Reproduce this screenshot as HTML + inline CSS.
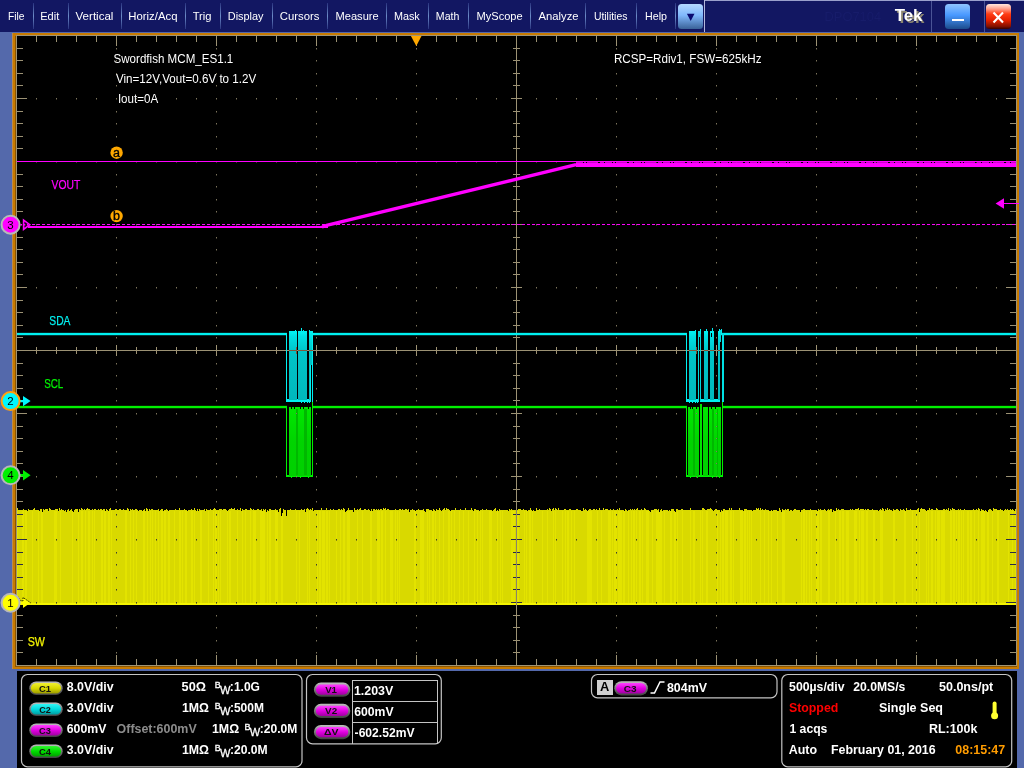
<!DOCTYPE html>
<html lang="en"><head><meta charset="utf-8"><title>DPO7104 - Swordfish MCM_ES1.1</title>
<style>
html,body{margin:0;padding:0;background:#5469ab;overflow:hidden}
svg{display:block;will-change:transform;font-family:"Liberation Sans",Arial,sans-serif}
svg text{white-space:pre}
</style></head><body>
<svg width="1024" height="768" viewBox="0 0 1024 768" shape-rendering="crispEdges">
<defs>
<linearGradient id="sepg" x1="0" y1="0" x2="0" y2="1"><stop offset="0" stop-color="#2a3480"/><stop offset="0.5" stop-color="#6c8cc8"/><stop offset="1" stop-color="#2a3480"/></linearGradient>
<linearGradient id="btnblue" x1="0" y1="0" x2="0" y2="1"><stop offset="0" stop-color="#b4d8ff"/><stop offset="0.45" stop-color="#80b8fc"/><stop offset="1" stop-color="#3a6298"/></linearGradient>
<linearGradient id="btnblue2" x1="0" y1="0" x2="0" y2="1"><stop offset="0" stop-color="#90c4ff"/><stop offset="0.45" stop-color="#4898ff"/><stop offset="1" stop-color="#1c4c8c"/></linearGradient>
<linearGradient id="btnred" x1="0" y1="0" x2="0" y2="1"><stop offset="0" stop-color="#ffe8e0"/><stop offset="0.2" stop-color="#ff9c88"/><stop offset="0.4" stop-color="#ff3c14"/><stop offset="0.65" stop-color="#e42000"/><stop offset="0.9" stop-color="#801000"/><stop offset="1" stop-color="#380000"/></linearGradient>
<linearGradient id="ring" x1="0" y1="0" x2="0" y2="1"><stop offset="0" stop-color="#c0c0c0"/><stop offset="0.5" stop-color="#787878"/><stop offset="1" stop-color="#404040"/></linearGradient>
<linearGradient id="py" x1="0" y1="0" x2="0" y2="1"><stop offset="0" stop-color="#f0f030"/><stop offset="0.5" stop-color="#d8d800"/><stop offset="1" stop-color="#9c9c00"/></linearGradient>
<linearGradient id="pc" x1="0" y1="0" x2="0" y2="1"><stop offset="0" stop-color="#30f4f4"/><stop offset="0.5" stop-color="#00d8dc"/><stop offset="1" stop-color="#009ca0"/></linearGradient>
<linearGradient id="pm" x1="0" y1="0" x2="0" y2="1"><stop offset="0" stop-color="#ff40ff"/><stop offset="0.5" stop-color="#e000e0"/><stop offset="1" stop-color="#a000a0"/></linearGradient>
<linearGradient id="pg" x1="0" y1="0" x2="0" y2="1"><stop offset="0" stop-color="#30f430"/><stop offset="0.5" stop-color="#00dc00"/><stop offset="1" stop-color="#00a000"/></linearGradient>
<linearGradient id="gcy" x1="0" y1="0" x2="0" y2="1"><stop offset="0" stop-color="#00f4f4"/><stop offset="0.08" stop-color="#00e0e4"/><stop offset="0.3" stop-color="#00c4c8"/><stop offset="1" stop-color="#00b8bc"/></linearGradient>
<linearGradient id="ggr" x1="0" y1="0" x2="0" y2="1"><stop offset="0" stop-color="#00e800"/><stop offset="0.5" stop-color="#00d400"/><stop offset="1" stop-color="#00d000"/></linearGradient>
</defs>
<rect x="0" y="0" width="1024" height="768" fill="#5469ab"/>
<rect x="0" y="0" width="1024" height="32" fill="#121762"/>
<rect x="704" y="0" width="320" height="1" fill="#9aa0cc"/>
<rect x="704" y="0" width="1" height="32" fill="#b4b8dc"/>
<rect x="33" y="3" width="1" height="26" fill="url(#sepg)"/>
<rect x="68" y="3" width="1" height="26" fill="url(#sepg)"/>
<rect x="121" y="3" width="1" height="26" fill="url(#sepg)"/>
<rect x="185" y="3" width="1" height="26" fill="url(#sepg)"/>
<rect x="220" y="3" width="1" height="26" fill="url(#sepg)"/>
<rect x="272" y="3" width="1" height="26" fill="url(#sepg)"/>
<rect x="327" y="3" width="1" height="26" fill="url(#sepg)"/>
<rect x="386" y="3" width="1" height="26" fill="url(#sepg)"/>
<rect x="428" y="3" width="1" height="26" fill="url(#sepg)"/>
<rect x="468" y="3" width="1" height="26" fill="url(#sepg)"/>
<rect x="530" y="3" width="1" height="26" fill="url(#sepg)"/>
<rect x="585" y="3" width="1" height="26" fill="url(#sepg)"/>
<rect x="636" y="3" width="1" height="26" fill="url(#sepg)"/>
<rect x="675" y="3" width="1" height="26" fill="url(#sepg)"/>
<rect x="931" y="1" width="1" height="31" fill="#4a5496"/>
<rect x="984" y="1" width="1" height="31" fill="#4a5496"/>
<text id="m0" x="7.91" y="20" font-size="11" fill="#fff" textLength="16.54" lengthAdjust="spacingAndGlyphs">File</text>
<text id="m1" x="40.22" y="20" font-size="11" fill="#fff" textLength="19.07" lengthAdjust="spacingAndGlyphs">Edit</text>
<text id="m2" x="75.56" y="20" font-size="11" fill="#fff" textLength="37.90" lengthAdjust="spacingAndGlyphs">Vertical</text>
<text id="m3" x="128.28" y="20" font-size="11" fill="#fff" textLength="49.19" lengthAdjust="spacingAndGlyphs">Horiz/Acq</text>
<text id="m4" x="192.71" y="20" font-size="11" fill="#fff" textLength="18.85" lengthAdjust="spacingAndGlyphs">Trig</text>
<text id="m5" x="227.77" y="20" font-size="11" fill="#fff" textLength="35.71" lengthAdjust="spacingAndGlyphs">Display</text>
<text id="m6" x="279.84" y="20" font-size="11" fill="#fff" textLength="39.58" lengthAdjust="spacingAndGlyphs">Cursors</text>
<text id="m7" x="335.55" y="20" font-size="11" fill="#fff" textLength="43.13" lengthAdjust="spacingAndGlyphs">Measure</text>
<text id="m8" x="393.92" y="20" font-size="11" fill="#fff" textLength="25.80" lengthAdjust="spacingAndGlyphs">Mask</text>
<text id="m9" x="435.87" y="20" font-size="11" fill="#fff" textLength="23.49" lengthAdjust="spacingAndGlyphs">Math</text>
<text id="m10" x="476.56" y="20" font-size="11" fill="#fff" textLength="46.14" lengthAdjust="spacingAndGlyphs">MyScope</text>
<text id="m11" x="538.57" y="20" font-size="11" fill="#fff" textLength="39.98" lengthAdjust="spacingAndGlyphs">Analyze</text>
<text id="m12" x="593.91" y="20" font-size="11" fill="#fff" textLength="33.50" lengthAdjust="spacingAndGlyphs">Utilities</text>
<text id="m13" x="645.05" y="20" font-size="11" fill="#fff" textLength="21.97" lengthAdjust="spacingAndGlyphs">Help</text>
<rect x="678" y="4" width="25" height="25" rx="3.5" fill="url(#btnblue)" shape-rendering="geometricPrecision"/>
<path d="M686.9 13.8 L694.5 13.8 L690.7 21 Z" fill="#0a0a70" shape-rendering="geometricPrecision"/>
<text id="dpo" x="824.56" y="20.5" font-size="13" fill="#171c6a" textLength="56.52" lengthAdjust="spacingAndGlyphs">DPO7104</text>
<text id="tek" x="894.74" y="20.5" font-size="16" font-weight="bold" fill="#ffffff" textLength="27.71" lengthAdjust="spacingAndGlyphs" style="filter:drop-shadow(2px 2px 0 #8c8670)">Tek</text>
<rect x="945" y="4" width="25" height="25" rx="3.5" fill="url(#btnblue2)" shape-rendering="geometricPrecision"/>
<rect x="952" y="19" width="12" height="2" fill="#ffffff"/>
<rect x="986" y="4" width="25" height="25" rx="3.5" fill="url(#btnred)" shape-rendering="geometricPrecision"/>
<path d="M993.5 12.5 L1003 22.5 M1003 12.5 L993.5 22.5" stroke="#fff" stroke-width="2.1" fill="none" shape-rendering="geometricPrecision"/>
<rect x="12" y="33" width="1007" height="636" fill="#c87a00"/>
<rect x="12" y="33" width="1" height="636" fill="#b88a50"/>
<rect x="15" y="36" width="1" height="631" fill="#8a5400"/>
<rect x="15" y="666" width="1002" height="1" fill="#8a5400"/>
<rect x="16" y="35" width="1001" height="631" fill="#a09474"/>
<rect x="17" y="36" width="999" height="629" fill="#000"/>
<rect x="17" y="510" width="999" height="95" fill="#d9d900"/>
<path d="M17 511v94 M22 511v94 M23 511v94 M25 511v94 M26 511v94 M32 511v94 M38 511v94 M41 511v94 M42 511v94 M54 511v94 M55 511v94 M56 511v94 M60 511v94 M72 511v94 M78 511v94 M81 511v94 M82 511v94 M85 511v94 M88 511v94 M89 511v94 M92 511v94 M94 511v94 M101 511v94 M102 511v94 M104 511v94 M105 511v94 M108 511v94 M109 511v94 M111 511v94 M125 511v94 M126 511v94 M130 511v94 M133 511v94 M136 511v94 M143 511v94 M144 511v94 M147 511v94 M150 511v94 M152 511v94 M155 511v94 M158 511v94 M161 511v94 M162 511v94 M164 511v94 M165 511v94 M168 511v94 M169 511v94 M174 511v94 M179 511v94 M180 511v94 M182 511v94 M185 511v94 M186 511v94 M191 511v94 M192 511v94 M194 511v94 M200 511v94 M201 511v94 M208 511v94 M213 511v94 M215 511v94 M216 511v94 M218 511v94 M220 511v94 M227 511v94 M229 511v94 M230 511v94 M237 511v94 M242 511v94 M245 511v94 M250 511v94 M253 511v94 M254 511v94 M255 511v94 M260 511v94 M261 511v94 M262 511v94 M263 511v94 M264 511v94 M267 511v94 M269 511v94 M270 511v94 M275 511v94 M276 511v94 M277 511v94 M281 511v94 M282 511v94 M296 511v94 M299 511v94 M307 511v94 M309 511v94 M317 511v94 M319 511v94 M320 511v94 M322 511v94 M323 511v94 M324 511v94 M326 511v94 M327 511v94 M329 511v94 M336 511v94 M340 511v94 M343 511v94 M344 511v94 M347 511v94 M348 511v94 M349 511v94 M357 511v94 M362 511v94 M370 511v94 M371 511v94 M377 511v94 M378 511v94 M379 511v94 M381 511v94 M382 511v94 M385 511v94 M390 511v94 M391 511v94 M392 511v94 M395 511v94 M397 511v94 M399 511v94 M414 511v94 M415 511v94 M420 511v94 M421 511v94 M422 511v94 M423 511v94 M427 511v94 M429 511v94 M432 511v94 M433 511v94 M435 511v94 M439 511v94 M443 511v94 M448 511v94 M449 511v94 M451 511v94 M454 511v94 M459 511v94 M463 511v94 M468 511v94 M474 511v94 M477 511v94 M480 511v94 M482 511v94 M489 511v94 M490 511v94 M491 511v94 M497 511v94 M500 511v94 M502 511v94 M511 511v94 M512 511v94 M513 511v94 M514 511v94 M517 511v94 M518 511v94 M524 511v94 M526 511v94 M529 511v94 M530 511v94 M532 511v94 M542 511v94 M547 511v94 M553 511v94 M555 511v94 M562 511v94 M565 511v94 M567 511v94 M568 511v94 M571 511v94 M574 511v94 M587 511v94 M588 511v94 M589 511v94 M590 511v94 M591 511v94 M597 511v94 M601 511v94 M608 511v94 M609 511v94 M610 511v94 M612 511v94 M614 511v94 M615 511v94 M616 511v94 M618 511v94 M619 511v94 M620 511v94 M621 511v94 M623 511v94 M624 511v94 M628 511v94 M631 511v94 M633 511v94 M634 511v94 M636 511v94 M639 511v94 M640 511v94 M642 511v94 M646 511v94 M647 511v94 M648 511v94 M652 511v94 M656 511v94 M657 511v94 M658 511v94 M659 511v94 M660 511v94 M661 511v94 M664 511v94 M670 511v94 M671 511v94 M674 511v94 M675 511v94 M677 511v94 M682 511v94 M690 511v94 M693 511v94 M694 511v94 M700 511v94 M702 511v94 M706 511v94 M707 511v94 M717 511v94 M720 511v94 M722 511v94 M723 511v94 M725 511v94 M726 511v94 M727 511v94 M730 511v94 M731 511v94 M733 511v94 M740 511v94 M741 511v94 M742 511v94 M744 511v94 M745 511v94 M747 511v94 M749 511v94 M751 511v94 M760 511v94 M764 511v94 M768 511v94 M771 511v94 M777 511v94 M782 511v94 M783 511v94 M784 511v94 M801 511v94 M803 511v94 M804 511v94 M806 511v94 M809 511v94 M811 511v94 M816 511v94 M817 511v94 M818 511v94 M820 511v94 M821 511v94 M828 511v94 M829 511v94 M835 511v94 M839 511v94 M840 511v94 M842 511v94 M843 511v94 M846 511v94 M847 511v94 M848 511v94 M854 511v94 M855 511v94 M856 511v94 M859 511v94 M861 511v94 M862 511v94 M863 511v94 M866 511v94 M867 511v94 M873 511v94 M874 511v94 M880 511v94 M881 511v94 M882 511v94 M893 511v94 M894 511v94 M904 511v94 M905 511v94 M912 511v94 M916 511v94 M919 511v94 M926 511v94 M928 511v94 M931 511v94 M932 511v94 M935 511v94 M937 511v94 M938 511v94 M939 511v94 M941 511v94 M942 511v94 M943 511v94 M944 511v94 M950 511v94 M951 511v94 M953 511v94 M954 511v94 M956 511v94 M958 511v94 M959 511v94 M961 511v94 M963 511v94 M967 511v94 M968 511v94 M970 511v94 M971 511v94 M974 511v94 M978 511v94 M981 511v94 M982 511v94 M983 511v94 M984 511v94 M987 511v94 M988 511v94 M992 511v94 M997 511v94 M998 511v94 M1008 511v94 M1012 511v94 M1015 511v94" stroke="#e3e300" stroke-width="1" transform="translate(0.5,0)" fill="none"/>
<path d="M27 510v1 M39 510v1 M42 510v2 M48 510v1 M58 510v1 M64 510v1 M66 510v2 M69 510v1 M72 510v1 M73 510v2 M78 510v2 M105 510v1 M108 510v1 M129 510v1 M138 510v1 M142 510v1 M145 510v1 M148 510v1 M159 510v1 M163 510v1 M168 510v1 M187 510v1 M196 510v1 M198 510v1 M205 510v1 M227 510v1 M241 510v1 M262 510v1 M266 510v2 M268 510v1 M278 510v2 M305 510v2 M313 510v1 M345 510v2 M346 510v1 M353 510v2 M370 510v1 M372 510v1 M409 510v2 M415 510v1 M424 510v1 M425 510v2 M432 510v1 M435 510v1 M441 510v1 M450 510v1 M473 510v1 M479 510v1 M492 510v1 M496 510v1 M498 510v1 M508 510v1 M527 510v1 M532 510v1 M534 510v1 M535 510v1 M551 510v1 M581 510v1 M582 510v1 M587 510v1 M624 510v1 M627 510v1 M649 510v1 M650 510v2 M659 510v2 M662 510v1 M668 510v1 M670 510v1 M674 510v1 M675 510v2 M713 510v1 M720 510v2 M722 510v1 M743 510v1 M752 510v1 M769 510v1 M770 510v1 M772 510v1 M777 510v1 M778 510v1 M781 510v2 M789 510v1 M792 510v1 M800 510v2 M817 510v1 M826 510v1 M832 510v2 M834 510v1 M835 510v1 M878 510v1 M884 510v1 M892 510v1 M899 510v1 M905 510v1 M919 510v2 M926 510v1 M949 510v1 M980 510v1 M984 510v1 M986 510v1 M987 510v2 M992 510v1 M1003 510v1 M1014 510v1" stroke="#000" stroke-width="1" transform="translate(0.5,0)" fill="none"/>
<path d="M17 508v2 M23 509v1 M28 509v1 M33 509v1 M34 508v2 M40 509v1 M41 509v1 M43 509v1 M45 509v1 M46 509v1 M47 509v1 M49 508v2 M50 509v1 M55 509v1 M56 509v1 M57 509v1 M59 508v2 M61 509v1 M68 509v1 M71 509v1 M75 509v1 M76 509v1 M77 509v1 M79 509v1 M81 508v2 M82 509v1 M84 509v1 M86 509v1 M87 508v2 M88 509v1 M89 509v1 M92 509v1 M94 509v1 M95 509v1 M98 509v1 M100 509v1 M101 509v1 M103 509v1 M104 509v1 M106 509v1 M109 509v1 M110 508v2 M115 509v1 M116 509v1 M119 509v1 M120 509v1 M123 509v1 M127 508v2 M128 509v1 M130 509v1 M132 509v1 M135 509v1 M136 509v1 M144 509v1 M146 508v2 M147 509v1 M149 509v1 M151 509v1 M152 509v1 M158 509v1 M161 509v1 M162 509v1 M166 509v1 M175 509v1 M179 508v2 M184 509v1 M191 509v1 M194 508v2 M197 509v1 M199 509v1 M204 509v1 M206 509v1 M210 509v1 M213 509v1 M214 508v2 M215 509v1 M219 509v1 M220 509v1 M221 509v1 M223 509v1 M224 509v1 M225 509v1 M229 509v1 M230 509v1 M231 508v2 M232 509v1 M233 509v1 M234 508v2 M237 509v1 M240 508v2 M242 509v1 M245 509v1 M246 509v1 M250 508v2 M251 509v1 M253 509v1 M257 509v1 M258 509v1 M261 509v1 M263 509v1 M265 509v1 M269 509v1 M270 509v1 M275 509v1 M279 509v1 M280 508v2 M283 509v1 M290 509v1 M295 509v1 M301 509v1 M304 509v1 M306 509v1 M307 508v2 M308 509v1 M310 509v1 M312 508v2 M321 508v2 M326 508v2 M330 509v1 M333 509v1 M338 509v1 M339 509v1 M341 509v1 M343 508v2 M344 509v1 M348 508v2 M354 508v2 M357 509v1 M359 509v1 M360 508v2 M364 509v1 M365 509v1 M368 509v1 M371 509v1 M373 509v1 M374 509v1 M376 509v1 M378 509v1 M380 509v1 M381 509v1 M383 508v2 M384 509v1 M385 508v2 M387 509v1 M388 509v1 M395 509v1 M399 509v1 M400 509v1 M402 509v1 M405 509v1 M406 509v1 M408 509v1 M412 509v1 M418 509v1 M423 509v1 M426 509v1 M427 509v1 M428 509v1 M433 509v1 M436 509v1 M439 508v2 M443 509v1 M444 508v2 M446 508v2 M447 509v1 M448 509v1 M455 508v2 M460 509v1 M465 508v2 M471 508v2 M474 509v1 M475 509v1 M482 509v1 M486 509v1 M494 509v1 M495 508v2 M499 509v1 M509 509v1 M511 509v1 M516 508v2 M518 509v1 M519 509v1 M520 509v1 M523 509v1 M530 508v2 M536 508v2 M539 509v1 M547 509v1 M549 508v2 M550 509v1 M552 509v1 M553 508v2 M555 508v2 M556 509v1 M558 508v2 M564 509v1 M565 509v1 M569 509v1 M570 509v1 M576 509v1 M577 509v1 M583 508v2 M585 509v1 M589 509v1 M590 509v1 M593 509v1 M594 509v1 M596 509v1 M599 508v2 M603 508v2 M605 509v1 M606 509v1 M607 509v1 M610 509v1 M613 509v1 M617 509v1 M619 508v2 M625 509v1 M630 509v1 M632 509v1 M634 509v1 M636 509v1 M637 508v2 M641 509v1 M644 508v2 M645 509v1 M654 509v1 M655 509v1 M656 509v1 M658 509v1 M661 509v1 M671 509v1 M672 509v1 M673 509v1 M676 509v1 M677 509v1 M681 509v1 M682 509v1 M690 508v2 M702 508v2 M703 508v2 M704 509v1 M707 509v1 M708 509v1 M709 509v1 M710 508v2 M711 509v1 M715 509v1 M716 509v1 M723 509v1 M724 509v1 M729 508v2 M731 508v2 M739 508v2 M744 509v1 M745 509v1 M746 509v1 M756 508v2 M757 509v1 M758 508v2 M760 508v2 M762 509v1 M765 509v1 M779 508v2 M782 509v1 M785 509v1 M787 509v1 M788 509v1 M794 509v1 M795 509v1 M803 509v1 M804 509v1 M810 509v1 M818 509v1 M820 509v1 M824 509v1 M828 509v1 M830 509v1 M831 509v1 M836 508v2 M838 509v1 M841 509v1 M842 509v1 M843 509v1 M850 509v1 M852 509v1 M855 509v1 M856 509v1 M857 509v1 M858 508v2 M860 509v1 M861 509v1 M862 509v1 M863 509v1 M865 509v1 M867 509v1 M868 509v1 M872 509v1 M880 509v1 M882 508v2 M883 509v1 M885 509v1 M887 508v2 M889 509v1 M893 509v1 M896 509v1 M897 509v1 M900 509v1 M903 509v1 M906 508v2 M910 509v1 M917 509v1 M918 508v2 M920 509v1 M921 508v2 M922 509v1 M923 509v1 M924 509v1 M929 508v2 M931 509v1 M932 509v1 M936 508v2 M937 509v1 M943 509v1 M944 509v1 M946 509v1 M948 508v2 M950 509v1 M952 508v2 M953 509v1 M954 509v1 M958 509v1 M960 509v1 M964 509v1 M973 509v1 M976 509v1 M978 508v2 M979 509v1 M981 509v1 M989 509v1 M990 509v1 M993 508v2 M994 509v1 M995 509v1 M996 509v1 M1000 509v1 M1005 509v1 M1007 509v1 M1010 509v1 M1012 509v1 M1015 509v1" stroke="#d9d900" stroke-width="1" transform="translate(0.5,0)" fill="none"/>
<rect x="17" y="603" width="999" height="2" fill="#f4f400"/>
<rect x="281" y="510" width="1" height="6" fill="#000"/>
<rect x="286" y="510" width="1" height="6" fill="#000"/>
<rect x="282" y="510" width="1" height="3" fill="#000"/>
<path d="M36.5 36v6M36.5 659v6M17 48.5h6M1010 48.5h6M56.5 36v6M56.5 659v6M17 60.5h6M1010 60.5h6M76.5 36v6M76.5 659v6M17 73.5h6M1010 73.5h6M96.5 36v6M96.5 659v6M17 85.5h6M1010 85.5h6M116.5 36v10M116.5 655v10M17 98.5h10M1006 98.5h10M136.5 36v6M136.5 659v6M17 111.5h6M1010 111.5h6M156.5 36v6M156.5 659v6M17 123.5h6M1010 123.5h6M176.5 36v6M176.5 659v6M17 136.5h6M1010 136.5h6M196.5 36v6M196.5 659v6M17 148.5h6M1010 148.5h6M216.5 36v10M216.5 655v10M17 161.5h10M1006 161.5h10M236.5 36v6M236.5 659v6M17 174.5h6M1010 174.5h6M256.5 36v6M256.5 659v6M17 186.5h6M1010 186.5h6M276.5 36v6M276.5 659v6M17 199.5h6M1010 199.5h6M296.5 36v6M296.5 659v6M17 211.5h6M1010 211.5h6M316.5 36v10M316.5 655v10M17 224.5h10M1006 224.5h10M336.5 36v6M336.5 659v6M17 237.5h6M1010 237.5h6M356.5 36v6M356.5 659v6M17 249.5h6M1010 249.5h6M376.5 36v6M376.5 659v6M17 262.5h6M1010 262.5h6M396.5 36v6M396.5 659v6M17 274.5h6M1010 274.5h6M416.5 36v10M416.5 655v10M17 287.5h10M1006 287.5h10M436.5 36v6M436.5 659v6M17 300.5h6M1010 300.5h6M456.5 36v6M456.5 659v6M17 312.5h6M1010 312.5h6M476.5 36v6M476.5 659v6M17 325.5h6M1010 325.5h6M496.5 36v6M496.5 659v6M17 337.5h6M1010 337.5h6M516.5 36v10M516.5 655v10M17 350.5h10M1006 350.5h10M536.5 36v6M536.5 659v6M17 363.5h6M1010 363.5h6M556.5 36v6M556.5 659v6M17 375.5h6M1010 375.5h6M576.5 36v6M576.5 659v6M17 388.5h6M1010 388.5h6M596.5 36v6M596.5 659v6M17 400.5h6M1010 400.5h6M616.5 36v10M616.5 655v10M17 413.5h10M1006 413.5h10M636.5 36v6M636.5 659v6M17 426.5h6M1010 426.5h6M656.5 36v6M656.5 659v6M17 438.5h6M1010 438.5h6M676.5 36v6M676.5 659v6M17 451.5h6M1010 451.5h6M696.5 36v6M696.5 659v6M17 463.5h6M1010 463.5h6M716.5 36v10M716.5 655v10M17 476.5h10M1006 476.5h10M736.5 36v6M736.5 659v6M17 489.5h6M1010 489.5h6M756.5 36v6M756.5 659v6M17 501.5h6M1010 501.5h6M776.5 36v6M776.5 659v6M796.5 36v6M796.5 659v6M816.5 36v10M816.5 655v10M836.5 36v6M836.5 659v6M856.5 36v6M856.5 659v6M876.5 36v6M876.5 659v6M896.5 36v6M896.5 659v6M916.5 36v10M916.5 655v10M936.5 36v6M936.5 659v6M17 615.5h6M1010 615.5h6M956.5 36v6M956.5 659v6M17 627.5h6M1010 627.5h6M976.5 36v6M976.5 659v6M17 640.5h6M1010 640.5h6M996.5 36v6M996.5 659v6M17 652.5h6M1010 652.5h6M36.5 347v7M513 48.5h7M56.5 347v7M513 60.5h7M76.5 347v7M513 73.5h7M96.5 347v7M513 85.5h7M116.5 345v11M511 98.5h11M136.5 347v7M513 111.5h7M156.5 347v7M513 123.5h7M176.5 347v7M513 136.5h7M196.5 347v7M513 148.5h7M216.5 345v11M511 161.5h11M236.5 347v7M513 174.5h7M256.5 347v7M513 186.5h7M276.5 347v7M513 199.5h7M296.5 347v7M513 211.5h7M316.5 345v11M511 224.5h11M336.5 347v7M513 237.5h7M356.5 347v7M513 249.5h7M376.5 347v7M513 262.5h7M396.5 347v7M513 274.5h7M416.5 345v11M511 287.5h11M436.5 347v7M513 300.5h7M456.5 347v7M513 312.5h7M476.5 347v7M513 325.5h7M496.5 347v7M513 337.5h7M536.5 347v7M513 363.5h7M556.5 347v7M513 375.5h7M576.5 347v7M513 388.5h7M596.5 347v7M513 400.5h7M616.5 345v11M511 413.5h11M636.5 347v7M513 426.5h7M656.5 347v7M513 438.5h7M676.5 347v7M513 451.5h7M696.5 347v7M513 463.5h7M716.5 345v11M511 476.5h11M736.5 347v7M513 489.5h7M756.5 347v7M513 501.5h7M776.5 347v7M796.5 347v7M816.5 345v11M836.5 347v7M856.5 347v7M876.5 347v7M896.5 347v7M916.5 345v11M936.5 347v7M513 615.5h7M956.5 347v7M513 627.5h7M976.5 347v7M513 640.5h7M996.5 347v7M513 652.5h7" stroke="#9c9274" stroke-width="1" fill="none"/>
<path d="M17 514.5h6M1010 514.5h6M17 526.5h6M1010 526.5h6M17 539.5h10M1006 539.5h10M17 552.5h6M1010 552.5h6M17 564.5h6M1010 564.5h6M17 577.5h6M1010 577.5h6M17 589.5h6M1010 589.5h6M17 602.5h10M1006 602.5h10M513 514.5h7M513 526.5h7M511 539.5h11M513 552.5h7M513 564.5h7M513 577.5h7M513 589.5h7M511 602.5h11" stroke="#2a2a48" stroke-width="1" fill="none"/>
<path d="M36 98.5h1M56 98.5h1M76 98.5h1M96 98.5h1M116 98.5h1M136 98.5h1M156 98.5h1M176 98.5h1M196 98.5h1M216 98.5h1M236 98.5h1M256 98.5h1M276 98.5h1M296 98.5h1M316 98.5h1M336 98.5h1M356 98.5h1M376 98.5h1M396 98.5h1M416 98.5h1M436 98.5h1M456 98.5h1M476 98.5h1M496 98.5h1M536 98.5h1M556 98.5h1M576 98.5h1M596 98.5h1M616 98.5h1M636 98.5h1M656 98.5h1M676 98.5h1M696 98.5h1M716 98.5h1M736 98.5h1M756 98.5h1M776 98.5h1M796 98.5h1M816 98.5h1M836 98.5h1M856 98.5h1M876 98.5h1M896 98.5h1M916 98.5h1M936 98.5h1M956 98.5h1M976 98.5h1M996 98.5h1M116 48.5h1M116 60.5h1M116 73.5h1M116 85.5h1M116 111.5h1M116 123.5h1M116 136.5h1M116 148.5h1M116 174.5h1M116 186.5h1M116 199.5h1M116 211.5h1M116 237.5h1M116 249.5h1M116 262.5h1M116 274.5h1M116 300.5h1M116 312.5h1M116 325.5h1M116 337.5h1M116 363.5h1M116 375.5h1M116 388.5h1M116 400.5h1M116 426.5h1M116 438.5h1M116 451.5h1M116 463.5h1M116 489.5h1M116 501.5h1M116 615.5h1M116 627.5h1M116 640.5h1M116 652.5h1M36 161.5h1M56 161.5h1M76 161.5h1M96 161.5h1M116 161.5h1M136 161.5h1M156 161.5h1M176 161.5h1M196 161.5h1M216 161.5h1M236 161.5h1M256 161.5h1M276 161.5h1M296 161.5h1M316 161.5h1M336 161.5h1M356 161.5h1M376 161.5h1M396 161.5h1M416 161.5h1M436 161.5h1M456 161.5h1M476 161.5h1M496 161.5h1M536 161.5h1M556 161.5h1M576 161.5h1M596 161.5h1M616 161.5h1M636 161.5h1M656 161.5h1M676 161.5h1M696 161.5h1M716 161.5h1M736 161.5h1M756 161.5h1M776 161.5h1M796 161.5h1M816 161.5h1M836 161.5h1M856 161.5h1M876 161.5h1M896 161.5h1M916 161.5h1M936 161.5h1M956 161.5h1M976 161.5h1M996 161.5h1M216 48.5h1M216 60.5h1M216 73.5h1M216 85.5h1M216 111.5h1M216 123.5h1M216 136.5h1M216 148.5h1M216 174.5h1M216 186.5h1M216 199.5h1M216 211.5h1M216 237.5h1M216 249.5h1M216 262.5h1M216 274.5h1M216 300.5h1M216 312.5h1M216 325.5h1M216 337.5h1M216 363.5h1M216 375.5h1M216 388.5h1M216 400.5h1M216 426.5h1M216 438.5h1M216 451.5h1M216 463.5h1M216 489.5h1M216 501.5h1M216 615.5h1M216 627.5h1M216 640.5h1M216 652.5h1M36 224.5h1M56 224.5h1M76 224.5h1M96 224.5h1M116 224.5h1M136 224.5h1M156 224.5h1M176 224.5h1M196 224.5h1M216 224.5h1M236 224.5h1M256 224.5h1M276 224.5h1M296 224.5h1M316 224.5h1M336 224.5h1M356 224.5h1M376 224.5h1M396 224.5h1M416 224.5h1M436 224.5h1M456 224.5h1M476 224.5h1M496 224.5h1M536 224.5h1M556 224.5h1M576 224.5h1M596 224.5h1M616 224.5h1M636 224.5h1M656 224.5h1M676 224.5h1M696 224.5h1M716 224.5h1M736 224.5h1M756 224.5h1M776 224.5h1M796 224.5h1M816 224.5h1M836 224.5h1M856 224.5h1M876 224.5h1M896 224.5h1M916 224.5h1M936 224.5h1M956 224.5h1M976 224.5h1M996 224.5h1M316 48.5h1M316 60.5h1M316 73.5h1M316 85.5h1M316 111.5h1M316 123.5h1M316 136.5h1M316 148.5h1M316 174.5h1M316 186.5h1M316 199.5h1M316 211.5h1M316 237.5h1M316 249.5h1M316 262.5h1M316 274.5h1M316 300.5h1M316 312.5h1M316 325.5h1M316 337.5h1M316 363.5h1M316 375.5h1M316 388.5h1M316 400.5h1M316 426.5h1M316 438.5h1M316 451.5h1M316 463.5h1M316 489.5h1M316 501.5h1M316 615.5h1M316 627.5h1M316 640.5h1M316 652.5h1M36 287.5h1M56 287.5h1M76 287.5h1M96 287.5h1M116 287.5h1M136 287.5h1M156 287.5h1M176 287.5h1M196 287.5h1M216 287.5h1M236 287.5h1M256 287.5h1M276 287.5h1M296 287.5h1M316 287.5h1M336 287.5h1M356 287.5h1M376 287.5h1M396 287.5h1M416 287.5h1M436 287.5h1M456 287.5h1M476 287.5h1M496 287.5h1M536 287.5h1M556 287.5h1M576 287.5h1M596 287.5h1M616 287.5h1M636 287.5h1M656 287.5h1M676 287.5h1M696 287.5h1M716 287.5h1M736 287.5h1M756 287.5h1M776 287.5h1M796 287.5h1M816 287.5h1M836 287.5h1M856 287.5h1M876 287.5h1M896 287.5h1M916 287.5h1M936 287.5h1M956 287.5h1M976 287.5h1M996 287.5h1M416 48.5h1M416 60.5h1M416 73.5h1M416 85.5h1M416 111.5h1M416 123.5h1M416 136.5h1M416 148.5h1M416 174.5h1M416 186.5h1M416 199.5h1M416 211.5h1M416 237.5h1M416 249.5h1M416 262.5h1M416 274.5h1M416 300.5h1M416 312.5h1M416 325.5h1M416 337.5h1M416 363.5h1M416 375.5h1M416 388.5h1M416 400.5h1M416 426.5h1M416 438.5h1M416 451.5h1M416 463.5h1M416 489.5h1M416 501.5h1M416 615.5h1M416 627.5h1M416 640.5h1M416 652.5h1M36 413.5h1M56 413.5h1M76 413.5h1M96 413.5h1M116 413.5h1M136 413.5h1M156 413.5h1M176 413.5h1M196 413.5h1M216 413.5h1M236 413.5h1M256 413.5h1M276 413.5h1M296 413.5h1M316 413.5h1M336 413.5h1M356 413.5h1M376 413.5h1M396 413.5h1M416 413.5h1M436 413.5h1M456 413.5h1M476 413.5h1M496 413.5h1M536 413.5h1M556 413.5h1M576 413.5h1M596 413.5h1M616 413.5h1M636 413.5h1M656 413.5h1M676 413.5h1M696 413.5h1M716 413.5h1M736 413.5h1M756 413.5h1M776 413.5h1M796 413.5h1M816 413.5h1M836 413.5h1M856 413.5h1M876 413.5h1M896 413.5h1M916 413.5h1M936 413.5h1M956 413.5h1M976 413.5h1M996 413.5h1M616 48.5h1M616 60.5h1M616 73.5h1M616 85.5h1M616 111.5h1M616 123.5h1M616 136.5h1M616 148.5h1M616 174.5h1M616 186.5h1M616 199.5h1M616 211.5h1M616 237.5h1M616 249.5h1M616 262.5h1M616 274.5h1M616 300.5h1M616 312.5h1M616 325.5h1M616 337.5h1M616 363.5h1M616 375.5h1M616 388.5h1M616 400.5h1M616 426.5h1M616 438.5h1M616 451.5h1M616 463.5h1M616 489.5h1M616 501.5h1M616 615.5h1M616 627.5h1M616 640.5h1M616 652.5h1M36 476.5h1M56 476.5h1M76 476.5h1M96 476.5h1M116 476.5h1M136 476.5h1M156 476.5h1M176 476.5h1M196 476.5h1M216 476.5h1M236 476.5h1M256 476.5h1M276 476.5h1M296 476.5h1M316 476.5h1M336 476.5h1M356 476.5h1M376 476.5h1M396 476.5h1M416 476.5h1M436 476.5h1M456 476.5h1M476 476.5h1M496 476.5h1M536 476.5h1M556 476.5h1M576 476.5h1M596 476.5h1M616 476.5h1M636 476.5h1M656 476.5h1M676 476.5h1M696 476.5h1M716 476.5h1M736 476.5h1M756 476.5h1M776 476.5h1M796 476.5h1M816 476.5h1M836 476.5h1M856 476.5h1M876 476.5h1M896 476.5h1M916 476.5h1M936 476.5h1M956 476.5h1M976 476.5h1M996 476.5h1M716 48.5h1M716 60.5h1M716 73.5h1M716 85.5h1M716 111.5h1M716 123.5h1M716 136.5h1M716 148.5h1M716 174.5h1M716 186.5h1M716 199.5h1M716 211.5h1M716 237.5h1M716 249.5h1M716 262.5h1M716 274.5h1M716 300.5h1M716 312.5h1M716 325.5h1M716 337.5h1M716 363.5h1M716 375.5h1M716 388.5h1M716 400.5h1M716 426.5h1M716 438.5h1M716 451.5h1M716 463.5h1M716 489.5h1M716 501.5h1M716 615.5h1M716 627.5h1M716 640.5h1M716 652.5h1M816 48.5h1M816 60.5h1M816 73.5h1M816 85.5h1M816 111.5h1M816 123.5h1M816 136.5h1M816 148.5h1M816 174.5h1M816 186.5h1M816 199.5h1M816 211.5h1M816 237.5h1M816 249.5h1M816 262.5h1M816 274.5h1M816 300.5h1M816 312.5h1M816 325.5h1M816 337.5h1M816 363.5h1M816 375.5h1M816 388.5h1M816 400.5h1M816 426.5h1M816 438.5h1M816 451.5h1M816 463.5h1M816 489.5h1M816 501.5h1M816 615.5h1M816 627.5h1M816 640.5h1M816 652.5h1M916 48.5h1M916 60.5h1M916 73.5h1M916 85.5h1M916 111.5h1M916 123.5h1M916 136.5h1M916 148.5h1M916 174.5h1M916 186.5h1M916 199.5h1M916 211.5h1M916 237.5h1M916 249.5h1M916 262.5h1M916 274.5h1M916 300.5h1M916 312.5h1M916 325.5h1M916 337.5h1M916 363.5h1M916 375.5h1M916 388.5h1M916 400.5h1M916 426.5h1M916 438.5h1M916 451.5h1M916 463.5h1M916 489.5h1M916 501.5h1M916 615.5h1M916 627.5h1M916 640.5h1M916 652.5h1" stroke="#7c745c" stroke-width="1" fill="none"/>
<path d="M36 99.5h1M56 99.5h1M76 99.5h1M96 99.5h1M116 99.5h1M136 99.5h1M156 99.5h1M176 99.5h1M196 99.5h1M216 99.5h1M236 99.5h1M256 99.5h1M276 99.5h1M296 99.5h1M316 99.5h1M336 99.5h1M356 99.5h1M376 99.5h1M396 99.5h1M416 99.5h1M436 99.5h1M456 99.5h1M476 99.5h1M496 99.5h1M536 99.5h1M556 99.5h1M576 99.5h1M596 99.5h1M616 99.5h1M636 99.5h1M656 99.5h1M676 99.5h1M696 99.5h1M716 99.5h1M736 99.5h1M756 99.5h1M776 99.5h1M796 99.5h1M816 99.5h1M836 99.5h1M856 99.5h1M876 99.5h1M896 99.5h1M916 99.5h1M936 99.5h1M956 99.5h1M976 99.5h1M996 99.5h1M116 49.5h1M116 61.5h1M116 74.5h1M116 86.5h1M116 112.5h1M116 124.5h1M116 137.5h1M116 149.5h1M116 175.5h1M116 187.5h1M116 200.5h1M116 212.5h1M116 238.5h1M116 250.5h1M116 263.5h1M116 275.5h1M116 301.5h1M116 313.5h1M116 326.5h1M116 338.5h1M116 364.5h1M116 376.5h1M116 389.5h1M116 401.5h1M116 427.5h1M116 439.5h1M116 452.5h1M116 464.5h1M116 490.5h1M116 502.5h1M116 616.5h1M116 628.5h1M116 641.5h1M116 653.5h1M36 162.5h1M56 162.5h1M76 162.5h1M96 162.5h1M116 162.5h1M136 162.5h1M156 162.5h1M176 162.5h1M196 162.5h1M216 162.5h1M236 162.5h1M256 162.5h1M276 162.5h1M296 162.5h1M316 162.5h1M336 162.5h1M356 162.5h1M376 162.5h1M396 162.5h1M416 162.5h1M436 162.5h1M456 162.5h1M476 162.5h1M496 162.5h1M536 162.5h1M556 162.5h1M576 162.5h1M596 162.5h1M616 162.5h1M636 162.5h1M656 162.5h1M676 162.5h1M696 162.5h1M716 162.5h1M736 162.5h1M756 162.5h1M776 162.5h1M796 162.5h1M816 162.5h1M836 162.5h1M856 162.5h1M876 162.5h1M896 162.5h1M916 162.5h1M936 162.5h1M956 162.5h1M976 162.5h1M996 162.5h1M216 49.5h1M216 61.5h1M216 74.5h1M216 86.5h1M216 112.5h1M216 124.5h1M216 137.5h1M216 149.5h1M216 175.5h1M216 187.5h1M216 200.5h1M216 212.5h1M216 238.5h1M216 250.5h1M216 263.5h1M216 275.5h1M216 301.5h1M216 313.5h1M216 326.5h1M216 338.5h1M216 364.5h1M216 376.5h1M216 389.5h1M216 401.5h1M216 427.5h1M216 439.5h1M216 452.5h1M216 464.5h1M216 490.5h1M216 502.5h1M216 616.5h1M216 628.5h1M216 641.5h1M216 653.5h1M36 225.5h1M56 225.5h1M76 225.5h1M96 225.5h1M116 225.5h1M136 225.5h1M156 225.5h1M176 225.5h1M196 225.5h1M216 225.5h1M236 225.5h1M256 225.5h1M276 225.5h1M296 225.5h1M316 225.5h1M336 225.5h1M356 225.5h1M376 225.5h1M396 225.5h1M416 225.5h1M436 225.5h1M456 225.5h1M476 225.5h1M496 225.5h1M536 225.5h1M556 225.5h1M576 225.5h1M596 225.5h1M616 225.5h1M636 225.5h1M656 225.5h1M676 225.5h1M696 225.5h1M716 225.5h1M736 225.5h1M756 225.5h1M776 225.5h1M796 225.5h1M816 225.5h1M836 225.5h1M856 225.5h1M876 225.5h1M896 225.5h1M916 225.5h1M936 225.5h1M956 225.5h1M976 225.5h1M996 225.5h1M316 49.5h1M316 61.5h1M316 74.5h1M316 86.5h1M316 112.5h1M316 124.5h1M316 137.5h1M316 149.5h1M316 175.5h1M316 187.5h1M316 200.5h1M316 212.5h1M316 238.5h1M316 250.5h1M316 263.5h1M316 275.5h1M316 301.5h1M316 313.5h1M316 326.5h1M316 338.5h1M316 364.5h1M316 376.5h1M316 389.5h1M316 401.5h1M316 427.5h1M316 439.5h1M316 452.5h1M316 464.5h1M316 490.5h1M316 502.5h1M316 616.5h1M316 628.5h1M316 641.5h1M316 653.5h1M36 288.5h1M56 288.5h1M76 288.5h1M96 288.5h1M116 288.5h1M136 288.5h1M156 288.5h1M176 288.5h1M196 288.5h1M216 288.5h1M236 288.5h1M256 288.5h1M276 288.5h1M296 288.5h1M316 288.5h1M336 288.5h1M356 288.5h1M376 288.5h1M396 288.5h1M416 288.5h1M436 288.5h1M456 288.5h1M476 288.5h1M496 288.5h1M536 288.5h1M556 288.5h1M576 288.5h1M596 288.5h1M616 288.5h1M636 288.5h1M656 288.5h1M676 288.5h1M696 288.5h1M716 288.5h1M736 288.5h1M756 288.5h1M776 288.5h1M796 288.5h1M816 288.5h1M836 288.5h1M856 288.5h1M876 288.5h1M896 288.5h1M916 288.5h1M936 288.5h1M956 288.5h1M976 288.5h1M996 288.5h1M416 49.5h1M416 61.5h1M416 74.5h1M416 86.5h1M416 112.5h1M416 124.5h1M416 137.5h1M416 149.5h1M416 175.5h1M416 187.5h1M416 200.5h1M416 212.5h1M416 238.5h1M416 250.5h1M416 263.5h1M416 275.5h1M416 301.5h1M416 313.5h1M416 326.5h1M416 338.5h1M416 364.5h1M416 376.5h1M416 389.5h1M416 401.5h1M416 427.5h1M416 439.5h1M416 452.5h1M416 464.5h1M416 490.5h1M416 502.5h1M416 616.5h1M416 628.5h1M416 641.5h1M416 653.5h1M36 414.5h1M56 414.5h1M76 414.5h1M96 414.5h1M116 414.5h1M136 414.5h1M156 414.5h1M176 414.5h1M196 414.5h1M216 414.5h1M236 414.5h1M256 414.5h1M276 414.5h1M296 414.5h1M316 414.5h1M336 414.5h1M356 414.5h1M376 414.5h1M396 414.5h1M416 414.5h1M436 414.5h1M456 414.5h1M476 414.5h1M496 414.5h1M536 414.5h1M556 414.5h1M576 414.5h1M596 414.5h1M616 414.5h1M636 414.5h1M656 414.5h1M676 414.5h1M696 414.5h1M716 414.5h1M736 414.5h1M756 414.5h1M776 414.5h1M796 414.5h1M816 414.5h1M836 414.5h1M856 414.5h1M876 414.5h1M896 414.5h1M916 414.5h1M936 414.5h1M956 414.5h1M976 414.5h1M996 414.5h1M616 49.5h1M616 61.5h1M616 74.5h1M616 86.5h1M616 112.5h1M616 124.5h1M616 137.5h1M616 149.5h1M616 175.5h1M616 187.5h1M616 200.5h1M616 212.5h1M616 238.5h1M616 250.5h1M616 263.5h1M616 275.5h1M616 301.5h1M616 313.5h1M616 326.5h1M616 338.5h1M616 364.5h1M616 376.5h1M616 389.5h1M616 401.5h1M616 427.5h1M616 439.5h1M616 452.5h1M616 464.5h1M616 490.5h1M616 502.5h1M616 616.5h1M616 628.5h1M616 641.5h1M616 653.5h1M36 477.5h1M56 477.5h1M76 477.5h1M96 477.5h1M116 477.5h1M136 477.5h1M156 477.5h1M176 477.5h1M196 477.5h1M216 477.5h1M236 477.5h1M256 477.5h1M276 477.5h1M296 477.5h1M316 477.5h1M336 477.5h1M356 477.5h1M376 477.5h1M396 477.5h1M416 477.5h1M436 477.5h1M456 477.5h1M476 477.5h1M496 477.5h1M536 477.5h1M556 477.5h1M576 477.5h1M596 477.5h1M616 477.5h1M636 477.5h1M656 477.5h1M676 477.5h1M696 477.5h1M716 477.5h1M736 477.5h1M756 477.5h1M776 477.5h1M796 477.5h1M816 477.5h1M836 477.5h1M856 477.5h1M876 477.5h1M896 477.5h1M916 477.5h1M936 477.5h1M956 477.5h1M976 477.5h1M996 477.5h1M716 49.5h1M716 61.5h1M716 74.5h1M716 86.5h1M716 112.5h1M716 124.5h1M716 137.5h1M716 149.5h1M716 175.5h1M716 187.5h1M716 200.5h1M716 212.5h1M716 238.5h1M716 250.5h1M716 263.5h1M716 275.5h1M716 301.5h1M716 313.5h1M716 326.5h1M716 338.5h1M716 364.5h1M716 376.5h1M716 389.5h1M716 401.5h1M716 427.5h1M716 439.5h1M716 452.5h1M716 464.5h1M716 490.5h1M716 502.5h1M716 616.5h1M716 628.5h1M716 641.5h1M716 653.5h1M816 49.5h1M816 61.5h1M816 74.5h1M816 86.5h1M816 112.5h1M816 124.5h1M816 137.5h1M816 149.5h1M816 175.5h1M816 187.5h1M816 200.5h1M816 212.5h1M816 238.5h1M816 250.5h1M816 263.5h1M816 275.5h1M816 301.5h1M816 313.5h1M816 326.5h1M816 338.5h1M816 364.5h1M816 376.5h1M816 389.5h1M816 401.5h1M816 427.5h1M816 439.5h1M816 452.5h1M816 464.5h1M816 490.5h1M816 502.5h1M816 616.5h1M816 628.5h1M816 641.5h1M816 653.5h1M916 49.5h1M916 61.5h1M916 74.5h1M916 86.5h1M916 112.5h1M916 124.5h1M916 137.5h1M916 149.5h1M916 175.5h1M916 187.5h1M916 200.5h1M916 212.5h1M916 238.5h1M916 250.5h1M916 263.5h1M916 275.5h1M916 301.5h1M916 313.5h1M916 326.5h1M916 338.5h1M916 364.5h1M916 376.5h1M916 389.5h1M916 401.5h1M916 427.5h1M916 439.5h1M916 452.5h1M916 464.5h1M916 490.5h1M916 502.5h1M916 616.5h1M916 628.5h1M916 641.5h1M916 653.5h1" stroke="#3c382c" stroke-width="1" fill="none"/>
<path d="M116 514.5h1M116 526.5h1M116 552.5h1M116 564.5h1M116 577.5h1M116 589.5h1M216 514.5h1M216 526.5h1M216 552.5h1M216 564.5h1M216 577.5h1M216 589.5h1M316 514.5h1M316 526.5h1M316 552.5h1M316 564.5h1M316 577.5h1M316 589.5h1M416 514.5h1M416 526.5h1M416 552.5h1M416 564.5h1M416 577.5h1M416 589.5h1M616 514.5h1M616 526.5h1M616 552.5h1M616 564.5h1M616 577.5h1M616 589.5h1M716 514.5h1M716 526.5h1M716 552.5h1M716 564.5h1M716 577.5h1M716 589.5h1M36 539.5h1M56 539.5h1M76 539.5h1M96 539.5h1M116 539.5h1M136 539.5h1M156 539.5h1M176 539.5h1M196 539.5h1M216 539.5h1M236 539.5h1M256 539.5h1M276 539.5h1M296 539.5h1M316 539.5h1M336 539.5h1M356 539.5h1M376 539.5h1M396 539.5h1M416 539.5h1M436 539.5h1M456 539.5h1M476 539.5h1M496 539.5h1M536 539.5h1M556 539.5h1M576 539.5h1M596 539.5h1M616 539.5h1M636 539.5h1M656 539.5h1M676 539.5h1M696 539.5h1M716 539.5h1M736 539.5h1M756 539.5h1M776 539.5h1M796 539.5h1M816 539.5h1M836 539.5h1M856 539.5h1M876 539.5h1M896 539.5h1M916 539.5h1M936 539.5h1M956 539.5h1M976 539.5h1M996 539.5h1M816 514.5h1M816 526.5h1M816 552.5h1M816 564.5h1M816 577.5h1M816 589.5h1M36 602.5h1M56 602.5h1M76 602.5h1M96 602.5h1M116 602.5h1M136 602.5h1M156 602.5h1M176 602.5h1M196 602.5h1M216 602.5h1M236 602.5h1M256 602.5h1M276 602.5h1M296 602.5h1M316 602.5h1M336 602.5h1M356 602.5h1M376 602.5h1M396 602.5h1M416 602.5h1M436 602.5h1M456 602.5h1M476 602.5h1M496 602.5h1M536 602.5h1M556 602.5h1M576 602.5h1M596 602.5h1M616 602.5h1M636 602.5h1M656 602.5h1M676 602.5h1M696 602.5h1M716 602.5h1M736 602.5h1M756 602.5h1M776 602.5h1M796 602.5h1M816 602.5h1M836 602.5h1M856 602.5h1M876 602.5h1M896 602.5h1M916 602.5h1M936 602.5h1M956 602.5h1M976 602.5h1M996 602.5h1M916 514.5h1M916 526.5h1M916 552.5h1M916 564.5h1M916 577.5h1M916 589.5h1" stroke="#3a3a3a" stroke-width="1" fill="none"/>
<path d="M116 515.5h1M116 527.5h1M116 553.5h1M116 565.5h1M116 578.5h1M116 590.5h1M216 515.5h1M216 527.5h1M216 553.5h1M216 565.5h1M216 578.5h1M216 590.5h1M316 515.5h1M316 527.5h1M316 553.5h1M316 565.5h1M316 578.5h1M316 590.5h1M416 515.5h1M416 527.5h1M416 553.5h1M416 565.5h1M416 578.5h1M416 590.5h1M616 515.5h1M616 527.5h1M616 553.5h1M616 565.5h1M616 578.5h1M616 590.5h1M716 515.5h1M716 527.5h1M716 553.5h1M716 565.5h1M716 578.5h1M716 590.5h1M36 540.5h1M56 540.5h1M76 540.5h1M96 540.5h1M116 540.5h1M136 540.5h1M156 540.5h1M176 540.5h1M196 540.5h1M216 540.5h1M236 540.5h1M256 540.5h1M276 540.5h1M296 540.5h1M316 540.5h1M336 540.5h1M356 540.5h1M376 540.5h1M396 540.5h1M416 540.5h1M436 540.5h1M456 540.5h1M476 540.5h1M496 540.5h1M536 540.5h1M556 540.5h1M576 540.5h1M596 540.5h1M616 540.5h1M636 540.5h1M656 540.5h1M676 540.5h1M696 540.5h1M716 540.5h1M736 540.5h1M756 540.5h1M776 540.5h1M796 540.5h1M816 540.5h1M836 540.5h1M856 540.5h1M876 540.5h1M896 540.5h1M916 540.5h1M936 540.5h1M956 540.5h1M976 540.5h1M996 540.5h1M816 515.5h1M816 527.5h1M816 553.5h1M816 565.5h1M816 578.5h1M816 590.5h1M36 603.5h1M56 603.5h1M76 603.5h1M96 603.5h1M116 603.5h1M136 603.5h1M156 603.5h1M176 603.5h1M196 603.5h1M216 603.5h1M236 603.5h1M256 603.5h1M276 603.5h1M296 603.5h1M316 603.5h1M336 603.5h1M356 603.5h1M376 603.5h1M396 603.5h1M416 603.5h1M436 603.5h1M456 603.5h1M476 603.5h1M496 603.5h1M536 603.5h1M556 603.5h1M576 603.5h1M596 603.5h1M616 603.5h1M636 603.5h1M656 603.5h1M676 603.5h1M696 603.5h1M716 603.5h1M736 603.5h1M756 603.5h1M776 603.5h1M796 603.5h1M816 603.5h1M836 603.5h1M856 603.5h1M876 603.5h1M896 603.5h1M916 603.5h1M936 603.5h1M956 603.5h1M976 603.5h1M996 603.5h1M916 515.5h1M916 527.5h1M916 553.5h1M916 565.5h1M916 578.5h1M916 590.5h1" stroke="#8a8a10" stroke-width="1" fill="none"/>
<rect x="516" y="36" width="1" height="629" fill="#9c9274"/>
<rect x="516" y="510" width="1" height="95" fill="#8c8468"/>
<rect x="17" y="350" width="999" height="1" fill="#9c9274"/>
<rect x="17" y="161" width="999" height="1" fill="#ff00ff"/>
<path d="M17 224.5H1016" stroke="#ff00ff" stroke-width="1" stroke-dasharray="3 2" fill="none"/>
<rect x="17" y="226" width="311" height="2" fill="#ff00ff"/>
<path d="M322 227 L327.5 225.2 L575 164.9 L1016 164.9" stroke="#ff00ff" stroke-width="3.4" fill="none" stroke-linejoin="round" shape-rendering="geometricPrecision"/>
<rect x="576" y="163" width="440" height="4" fill="#ff00ff"/>
<path d="M576 162.5H1016" stroke="#ff00ff" stroke-width="1" stroke-dasharray="7 1 2 1 11 2 4 1" opacity="0.8" fill="none"/>
<rect x="17" y="333" width="270" height="2" fill="#00f0f0"/>
<rect x="17" y="335" width="270" height="1" fill="#00f0f0" opacity="0.22"/>
<rect x="17" y="332" width="270" height="1" fill="#00f0f0" opacity="0.15"/>
<rect x="313" y="333" width="374" height="2" fill="#00f0f0"/>
<rect x="313" y="335" width="374" height="1" fill="#00f0f0" opacity="0.22"/>
<rect x="313" y="332" width="374" height="1" fill="#00f0f0" opacity="0.15"/>
<rect x="721" y="333" width="295" height="2" fill="#00f0f0"/>
<rect x="721" y="335" width="295" height="1" fill="#00f0f0" opacity="0.22"/>
<rect x="721" y="332" width="295" height="1" fill="#00f0f0" opacity="0.15"/>
<rect x="286" y="333" width="1" height="69" fill="#00f0f0"/>
<rect x="286" y="399" width="25" height="3" fill="#00f0f0"/>
<rect x="289" y="331" width="8" height="69" fill="url(#gcy)"/>
<rect x="298" y="331" width="9" height="69" fill="url(#gcy)"/>
<rect x="309" y="331" width="4" height="69" fill="url(#gcy)"/>
<rect x="312" y="333" width="1" height="69" fill="#00f0f0"/>
<rect x="311" y="365" width="1" height="35" fill="#000"/>
<rect x="310" y="365" width="1" height="36" fill="#00f0f0"/>
<rect x="295" y="330" width="1" height="4" fill="#00f0f0"/>
<rect x="301" y="328" width="1" height="6" fill="#00f0f0"/>
<rect x="303" y="330" width="1" height="4" fill="#00f0f0"/>
<rect x="309" y="330" width="1" height="4" fill="#00f0f0"/>
<rect x="292" y="331" width="1" height="3" fill="#00f0f0"/>
<rect x="301" y="402" width="1" height="1" fill="#00f0f0"/>
<rect x="304" y="402" width="1" height="1" fill="#00f0f0"/>
<rect x="307" y="402" width="1" height="1" fill="#00f0f0"/>
<rect x="309" y="402" width="1" height="1" fill="#00f0f0"/>
<rect x="686" y="333" width="1" height="69" fill="#00f0f0"/>
<rect x="686" y="399" width="13" height="3" fill="#00f0f0"/>
<rect x="700" y="399" width="20" height="3" fill="#00f0f0"/>
<rect x="689" y="331" width="7" height="69" fill="url(#gcy)"/>
<rect x="704" y="331" width="4" height="69" fill="url(#gcy)"/>
<rect x="710" y="331" width="4" height="69" fill="url(#gcy)"/>
<rect x="718" y="331" width="2" height="69" fill="url(#gcy)"/>
<rect x="698" y="331" width="1" height="70" fill="#00d8dc"/>
<rect x="700" y="331" width="1" height="70" fill="#00d8dc"/>
<rect x="699" y="331" width="1" height="6" fill="#00d8dc"/>
<rect x="720" y="330" width="1" height="12" fill="#00d8dc"/>
<rect x="722" y="333" width="2" height="69" fill="#00e0e4"/>
<rect x="711" y="333" width="1" height="4" fill="#000"/>
<rect x="695" y="330" width="1" height="4" fill="#00f0f0"/>
<rect x="700" y="329" width="1" height="5" fill="#00f0f0"/>
<rect x="706" y="329" width="1" height="5" fill="#00f0f0"/>
<rect x="712" y="328" width="1" height="6" fill="#00f0f0"/>
<rect x="719" y="329" width="1" height="5" fill="#00f0f0"/>
<rect x="721" y="329" width="1" height="5" fill="#00f0f0"/>
<rect x="689" y="402" width="1" height="1" fill="#00f0f0"/>
<rect x="692" y="402" width="1" height="1" fill="#00f0f0"/>
<rect x="695" y="402" width="1" height="1" fill="#00f0f0"/>
<rect x="697" y="402" width="1" height="1" fill="#00f0f0"/>
<rect x="289" y="350" width="8" height="1" fill="#80583c"/>
<rect x="298" y="350" width="9" height="1" fill="#80583c"/>
<rect x="309" y="350" width="4" height="1" fill="#80583c"/>
<rect x="689" y="350" width="7" height="1" fill="#80583c"/>
<rect x="704" y="350" width="4" height="1" fill="#80583c"/>
<rect x="710" y="350" width="4" height="1" fill="#80583c"/>
<rect x="718" y="350" width="2" height="1" fill="#80583c"/>
<rect x="17" y="406" width="270" height="2" fill="#00f000"/>
<rect x="17" y="408" width="270" height="1" fill="#00f000" opacity="0.22"/>
<rect x="17" y="405" width="270" height="1" fill="#00f000" opacity="0.15"/>
<rect x="313" y="406" width="374" height="2" fill="#00f000"/>
<rect x="313" y="408" width="374" height="1" fill="#00f000" opacity="0.22"/>
<rect x="313" y="405" width="374" height="1" fill="#00f000" opacity="0.15"/>
<rect x="723" y="406" width="293" height="2" fill="#00f000"/>
<rect x="723" y="408" width="293" height="1" fill="#00f000" opacity="0.22"/>
<rect x="723" y="405" width="293" height="1" fill="#00f000" opacity="0.15"/>
<rect x="286" y="406" width="1" height="71" fill="#00f000"/>
<rect x="286" y="475" width="27" height="2" fill="#00f000"/>
<rect x="289" y="407" width="22" height="69" fill="url(#ggr)"/>
<rect x="312" y="402" width="1" height="75" fill="#00f000"/>
<rect x="296" y="409" width="1" height="66" fill="#00b800"/>
<rect x="297" y="409" width="1" height="66" fill="#00b800"/>
<rect x="304" y="409" width="1" height="66" fill="#00b800"/>
<rect x="305" y="409" width="1" height="66" fill="#00b800"/>
<rect x="306" y="409" width="1" height="66" fill="#00b800"/>
<rect x="291" y="407" width="1" height="2" fill="#000"/>
<rect x="294" y="407" width="1" height="2" fill="#000"/>
<rect x="300" y="407" width="1" height="2" fill="#000"/>
<rect x="303" y="407" width="1" height="2" fill="#000"/>
<rect x="308" y="407" width="1" height="2" fill="#000"/>
<rect x="291" y="477" width="1" height="1" fill="#00f000"/>
<rect x="300" y="477" width="1" height="1" fill="#00f000"/>
<rect x="308" y="477" width="1" height="1" fill="#00f000"/>
<rect x="686" y="406" width="1" height="71" fill="#00f000"/>
<rect x="686" y="475" width="37" height="2" fill="#00f000"/>
<rect x="688" y="407" width="11" height="69" fill="url(#ggr)"/>
<rect x="703" y="407" width="5" height="69" fill="url(#ggr)"/>
<rect x="709" y="407" width="12" height="69" fill="url(#ggr)"/>
<rect x="700" y="404" width="2" height="72" fill="#00e400"/>
<rect x="722" y="402" width="1" height="75" fill="#00f000"/>
<rect x="693" y="409" width="1" height="66" fill="#00b800"/>
<rect x="694" y="409" width="1" height="66" fill="#00b800"/>
<rect x="712" y="409" width="1" height="66" fill="#00b800"/>
<rect x="713" y="409" width="1" height="66" fill="#00b800"/>
<rect x="717" y="409" width="1" height="66" fill="#00b800"/>
<rect x="690" y="407" width="1" height="2" fill="#000"/>
<rect x="692" y="407" width="1" height="2" fill="#000"/>
<rect x="696" y="407" width="1" height="2" fill="#000"/>
<rect x="711" y="407" width="1" height="2" fill="#000"/>
<rect x="715" y="407" width="1" height="2" fill="#000"/>
<rect x="690" y="477" width="1" height="1" fill="#00f000"/>
<rect x="697" y="477" width="1" height="1" fill="#00f000"/>
<rect x="712" y="477" width="1" height="1" fill="#00f000"/>
<rect x="719" y="477" width="1" height="1" fill="#00f000"/>
<rect x="296" y="347" width="1" height="7" fill="#80583c"/>
<rect x="696" y="347" width="1" height="7" fill="#80583c"/>
<rect x="716" y="413" width="1" height="1" fill="#8c6868"/>
<rect x="716" y="426" width="1" height="1" fill="#8c6868"/>
<rect x="716" y="438" width="1" height="1" fill="#8c6868"/>
<rect x="716" y="451" width="1" height="1" fill="#8c6868"/>
<rect x="716" y="463" width="1" height="1" fill="#8c6868"/>
<rect x="296" y="413" width="1" height="1" fill="#8c6868"/>
<rect x="696" y="413" width="1" height="1" fill="#8c6868"/>
<rect x="296" y="476" width="1" height="1" fill="#8c6868"/>
<rect x="696" y="476" width="1" height="1" fill="#8c6868"/>
<rect x="716" y="476" width="1" height="1" fill="#8c6868"/>
<text id="p0" x="113.52" y="62.7" font-size="12.5" fill="#fff" textLength="119.81" lengthAdjust="spacingAndGlyphs">Swordfish MCM_ES1.1</text>
<text id="p1" x="115.97" y="82.5" font-size="12.5" fill="#fff" textLength="140.25" lengthAdjust="spacingAndGlyphs">Vin=12V,Vout=0.6V to 1.2V</text>
<text id="p2" x="117.89" y="102.6" font-size="12.5" fill="#fff" textLength="40.32" lengthAdjust="spacingAndGlyphs">Iout=0A</text>
<text id="p3" x="613.93" y="62.7" font-size="12.5" fill="#fff" textLength="147.55" lengthAdjust="spacingAndGlyphs">RCSP=Rdiv1, FSW=625kHz</text>
<text id="l0" x="51.62" y="189" font-size="12.5" fill="#ff00ff" textLength="28.76" lengthAdjust="spacingAndGlyphs" stroke="#ff00ff" stroke-width="0.25">VOUT</text>
<text id="l1" x="49.28" y="324.8" font-size="12.5" fill="#00f0f0" textLength="21.14" lengthAdjust="spacingAndGlyphs" stroke="#00f0f0" stroke-width="0.25">SDA</text>
<text id="l2" x="44.16" y="388" font-size="12.5" fill="#00f000" textLength="19.18" lengthAdjust="spacingAndGlyphs" stroke="#00f000" stroke-width="0.25">SCL</text>
<text id="l3" x="27.73" y="645.5" font-size="12.5" fill="#f4f400" textLength="17.22" lengthAdjust="spacingAndGlyphs" stroke="#f4f400" stroke-width="0.25">SW</text>
<circle shape-rendering="geometricPrecision" cx="116.6" cy="152.7" r="6.2" fill="#ffa800"/>
<text id="ca" x="116.6" y="156.6" font-size="12.5" fill="#000" stroke="#000" stroke-width="0.35" text-anchor="middle">a</text>
<circle shape-rendering="geometricPrecision" cx="116.6" cy="216.1" r="6.2" fill="#ffa800"/>
<text id="cb" x="116.6" y="220.0" font-size="12.5" fill="#000" stroke="#000" stroke-width="0.35" text-anchor="middle">b</text>
<path d="M410.9 36 L421.5 36 L416.3 46.1 Z" fill="#ffa800" shape-rendering="geometricPrecision"/>
<path d="M995.6 203.5 L1004 198.3 L1004 208.7 Z" fill="#ff00ff" shape-rendering="geometricPrecision"/>
<rect x="1004" y="203" width="15" height="1" fill="#ff00ff"/>
<rect x="17" y="219.0" width="11" height="11" fill="#000"/>
<path d="M23.6 220.1 L29.8 224.7 L23.6 229.29999999999998 Z" fill="#1a001a" stroke="#ff00ff" stroke-width="1.6" shape-rendering="geometricPrecision"/>
<path d="M20.5 224.7H28" stroke="#ff00ff" stroke-width="1.4" stroke-dasharray="1.6 1.6" fill="none" shape-rendering="geometricPrecision"/>
<circle shape-rendering="geometricPrecision" cx="10.6" cy="224.7" r="9" fill="#ff00ff" stroke="#b8b8b8" stroke-width="2"/>
<text id="k3" x="10.4" y="228.79999999999998" font-size="11.5" fill="#000" text-anchor="middle">3</text>
<path d="M17 399.90000000000003 H23 V395.90000000000003 L30.6 401.1 L23 406.3 V402.3 H17 Z" fill="#00f8ff" shape-rendering="geometricPrecision"/>
<circle shape-rendering="geometricPrecision" cx="10.6" cy="401.1" r="9" fill="#00f8ff" stroke="#ffa010" stroke-width="2"/>
<text id="k2" x="10.4" y="405.20000000000005" font-size="11.5" fill="#000" text-anchor="middle">2</text>
<path d="M17 474.1 H23 V470.1 L30.6 475.3 L23 480.5 V476.5 H17 Z" fill="#00f000" shape-rendering="geometricPrecision"/>
<circle shape-rendering="geometricPrecision" cx="10.6" cy="475.3" r="9" fill="#00f000" stroke="#b8b8b8" stroke-width="2"/>
<text id="k4" x="10.4" y="479.40000000000003" font-size="11.5" fill="#000" text-anchor="middle">4</text>
<path d="M17 601.5999999999999 H23 V597.5999999999999 L30.6 602.8 L23 608.0 V604.0 H17 Z" fill="#ffff00" shape-rendering="geometricPrecision"/>
<path d="M17.5 596.3 L21 600.8 H23 V597.4 L30.6 602.8" stroke="#000" stroke-width="1" stroke-dasharray="1.2 1.2" fill="none" shape-rendering="geometricPrecision"/>
<circle shape-rendering="geometricPrecision" cx="10.6" cy="602.8" r="9" fill="#ffff00" stroke="#b8b8b8" stroke-width="2"/>
<text id="k1" x="10.4" y="606.9" font-size="11.5" fill="#000" text-anchor="middle">1</text>
<rect x="17" y="671" width="1000" height="97" fill="#000"/>
<rect x="21.5" y="674.5" width="280.5" height="92.29999999999995" rx="6" fill="none" stroke="#c4c4c4" stroke-width="1.2" shape-rendering="geometricPrecision"/>
<rect x="306.5" y="674.5" width="134.8" height="69.29999999999995" rx="6" fill="none" stroke="#c4c4c4" stroke-width="1.2" shape-rendering="geometricPrecision"/>
<rect x="591.5" y="674.5" width="185.5" height="23.299999999999955" rx="6" fill="none" stroke="#c4c4c4" stroke-width="1.2" shape-rendering="geometricPrecision"/>
<rect x="781.8" y="674.5" width="229.9000000000001" height="92.29999999999995" rx="6" fill="none" stroke="#c4c4c4" stroke-width="1.2" shape-rendering="geometricPrecision"/>
<rect x="29.3" y="681.50" width="33.4" height="13.6" rx="6.8" fill="url(#ring)" style="shape-rendering:geometricPrecision"/>
<rect x="30.900000000000002" y="683.10" width="30.2" height="10.399999999999999" rx="5.199999999999999" fill="url(#py)" style="shape-rendering:geometricPrecision"/>
<text id="pc1" x="39.00" y="691.6" font-size="9.7" font-weight="bold" fill="#101010" textLength="12.11" lengthAdjust="spacingAndGlyphs">C1</text>
<rect x="29.3" y="702.50" width="33.4" height="13.6" rx="6.8" fill="url(#ring)" style="shape-rendering:geometricPrecision"/>
<rect x="30.900000000000002" y="704.10" width="30.2" height="10.399999999999999" rx="5.199999999999999" fill="url(#pc)" style="shape-rendering:geometricPrecision"/>
<text id="pc2" x="39.14" y="712.6" font-size="9.7" font-weight="bold" fill="#101010" textLength="11.63" lengthAdjust="spacingAndGlyphs">C2</text>
<rect x="29.3" y="723.50" width="33.4" height="13.6" rx="6.8" fill="url(#ring)" style="shape-rendering:geometricPrecision"/>
<rect x="30.900000000000002" y="725.10" width="30.2" height="10.399999999999999" rx="5.199999999999999" fill="url(#pm)" style="shape-rendering:geometricPrecision"/>
<text id="pc3" x="38.95" y="733.6" font-size="9.7" font-weight="bold" fill="#101010" textLength="11.87" lengthAdjust="spacingAndGlyphs">C3</text>
<rect x="29.3" y="744.50" width="33.4" height="13.6" rx="6.8" fill="url(#ring)" style="shape-rendering:geometricPrecision"/>
<rect x="30.900000000000002" y="746.10" width="30.2" height="10.399999999999999" rx="5.199999999999999" fill="url(#pg)" style="shape-rendering:geometricPrecision"/>
<text id="pc4" x="39.09" y="754.6" font-size="9.7" font-weight="bold" fill="#101010" textLength="11.99" lengthAdjust="spacingAndGlyphs">C4</text>
<text id="b0" x="66.75" y="691" font-size="12" font-weight="bold" fill="#fff" textLength="46.76" lengthAdjust="spacingAndGlyphs">8.0V/div</text>
<text id="b1" x="66.80" y="712" font-size="12" font-weight="bold" fill="#fff" textLength="46.71" lengthAdjust="spacingAndGlyphs">3.0V/div</text>
<text id="b2" x="66.79" y="733" font-size="12" font-weight="bold" fill="#fff" textLength="39.56" lengthAdjust="spacingAndGlyphs">600mV</text>
<text id="b3" x="66.80" y="754" font-size="12" font-weight="bold" fill="#fff" textLength="46.71" lengthAdjust="spacingAndGlyphs">3.0V/div</text>
<text id="b4" x="116.60" y="733" font-size="12" font-weight="bold" fill="#8c8c8c" textLength="80.10" lengthAdjust="spacingAndGlyphs">Offset:600mV</text>
<text id="b5" x="181.57" y="691" font-size="12" font-weight="bold" fill="#fff" textLength="24.38" lengthAdjust="spacingAndGlyphs">50Ω</text>
<text id="b6" x="181.95" y="712" font-size="12" font-weight="bold" fill="#fff" textLength="27.09" lengthAdjust="spacingAndGlyphs">1MΩ</text>
<text id="b7" x="211.92" y="733" font-size="12" font-weight="bold" fill="#fff" textLength="27.19" lengthAdjust="spacingAndGlyphs">1MΩ</text>
<text id="b8" x="181.95" y="754" font-size="12" font-weight="bold" fill="#fff" textLength="27.09" lengthAdjust="spacingAndGlyphs">1MΩ</text>
<text id="bwB0" x="214.83" y="688.2" font-size="9.5" fill="#fff" textLength="5.89" lengthAdjust="spacingAndGlyphs" stroke="#fff" stroke-width="0.35">B</text>
<text id="bwW0" x="219.96" y="694.2" font-size="11" fill="#fff" textLength="10.42" lengthAdjust="spacingAndGlyphs" stroke="#fff" stroke-width="0.3">W</text>
<text id="bwT0" x="229.88" y="691" font-size="12" font-weight="bold" fill="#fff" textLength="30.08" lengthAdjust="spacingAndGlyphs">:1.0G</text>
<text id="bwB1" x="214.83" y="709.2" font-size="9.5" fill="#fff" textLength="5.89" lengthAdjust="spacingAndGlyphs" stroke="#fff" stroke-width="0.35">B</text>
<text id="bwW1" x="219.96" y="715.2" font-size="11" fill="#fff" textLength="10.42" lengthAdjust="spacingAndGlyphs" stroke="#fff" stroke-width="0.3">W</text>
<text id="bwT1" x="229.93" y="712" font-size="12" font-weight="bold" fill="#fff" textLength="34.04" lengthAdjust="spacingAndGlyphs">:500M</text>
<text id="bwB2" x="244.40" y="730.2" font-size="9.5" fill="#fff" textLength="6.02" lengthAdjust="spacingAndGlyphs" stroke="#fff" stroke-width="0.35">B</text>
<text id="bwW2" x="249.65" y="736.2" font-size="11" fill="#fff" textLength="10.42" lengthAdjust="spacingAndGlyphs" stroke="#fff" stroke-width="0.3">W</text>
<text id="bwT2" x="259.74" y="733" font-size="12" font-weight="bold" fill="#fff" textLength="37.54" lengthAdjust="spacingAndGlyphs">:20.0M</text>
<text id="bwB3" x="214.83" y="751.2" font-size="9.5" fill="#fff" textLength="5.89" lengthAdjust="spacingAndGlyphs" stroke="#fff" stroke-width="0.35">B</text>
<text id="bwW3" x="219.96" y="757.2" font-size="11" fill="#fff" textLength="10.42" lengthAdjust="spacingAndGlyphs" stroke="#fff" stroke-width="0.3">W</text>
<text id="bwT3" x="229.92" y="754" font-size="12" font-weight="bold" fill="#fff" textLength="37.79" lengthAdjust="spacingAndGlyphs">:20.0M</text>
<path d="M352.5 743.5 V680.5 H437.5 V743.5 M352.5 701.5 H437.5 M352.5 722.5 H437.5" stroke="#c4c4c4" stroke-width="1" fill="none"/>
<rect x="313.9" y="682.60" width="36.4" height="14.2" rx="7.1" fill="url(#ring)" style="shape-rendering:geometricPrecision"/>
<rect x="315.9" y="684.60" width="32.4" height="10.2" rx="5.1" fill="url(#pm)" style="shape-rendering:geometricPrecision"/>
<text id="pv1" x="325.17" y="693.0" font-size="9.7" font-weight="bold" fill="#101010" textLength="11.86" lengthAdjust="spacingAndGlyphs">V1</text>
<rect x="313.9" y="703.80" width="36.4" height="14.2" rx="7.1" fill="url(#ring)" style="shape-rendering:geometricPrecision"/>
<rect x="315.9" y="705.80" width="32.4" height="10.2" rx="5.1" fill="url(#pm)" style="shape-rendering:geometricPrecision"/>
<text id="pv2" x="325.12" y="714.2" font-size="9.7" font-weight="bold" fill="#101010" textLength="12.05" lengthAdjust="spacingAndGlyphs">V2</text>
<rect x="313.9" y="725.00" width="36.4" height="14.2" rx="7.1" fill="url(#ring)" style="shape-rendering:geometricPrecision"/>
<rect x="315.9" y="727.00" width="32.4" height="10.2" rx="5.1" fill="url(#pm)" style="shape-rendering:geometricPrecision"/>
<text id="pv3" x="323.99" y="735.4" font-size="9.7" font-weight="bold" fill="#101010" textLength="14.51" lengthAdjust="spacingAndGlyphs">ΔV</text>
<text id="c0" x="353.92" y="694.5" font-size="12" font-weight="bold" fill="#fff" textLength="39.39" lengthAdjust="spacingAndGlyphs">1.203V</text>
<text id="c1" x="354.25" y="715.5" font-size="12" font-weight="bold" fill="#fff" textLength="39.38" lengthAdjust="spacingAndGlyphs">600mV</text>
<text id="c2" x="354.62" y="736.5" font-size="12" font-weight="bold" fill="#fff" textLength="59.90" lengthAdjust="spacingAndGlyphs">-602.52mV</text>
<rect x="597" y="680" width="16" height="15" fill="#d0d0d0"/>
<text id="ta" x="599.97" y="691" font-size="12" font-weight="bold" fill="#000" textLength="9.31" lengthAdjust="spacingAndGlyphs">A</text>
<rect x="614.3" y="681.20" width="33.6" height="14.2" rx="7.1" fill="url(#ring)" style="shape-rendering:geometricPrecision"/>
<rect x="616.0999999999999" y="683.00" width="30.0" height="10.6" rx="5.3" fill="url(#pm)" style="shape-rendering:geometricPrecision"/>
<text id="pt3" x="623.78" y="691.6" font-size="9.7" font-weight="bold" fill="#101010" textLength="12.87" lengthAdjust="spacingAndGlyphs">C3</text>
<path d="M650.5 693 H654.5 L660 682 H664.5" stroke="#fff" stroke-width="1.5" fill="none" shape-rendering="geometricPrecision"/>
<text id="tv" x="666.96" y="692" font-size="12" font-weight="bold" fill="#fff" textLength="40.00" lengthAdjust="spacingAndGlyphs">804mV</text>
<text id="r0" x="789.08" y="691" font-size="12" font-weight="bold" fill="#fff" textLength="55.44" lengthAdjust="spacingAndGlyphs">500µs/div</text>
<text id="r1" x="853.30" y="691" font-size="12" font-weight="bold" fill="#fff" textLength="52.04" lengthAdjust="spacingAndGlyphs">20.0MS/s</text>
<text id="r2" x="938.97" y="691" font-size="12" font-weight="bold" fill="#fff" textLength="54.32" lengthAdjust="spacingAndGlyphs">50.0ns/pt</text>
<text id="r3" x="788.91" y="712" font-size="12" font-weight="bold" fill="#ff0000" textLength="49.39" lengthAdjust="spacingAndGlyphs">Stopped</text>
<text id="r4" x="879.01" y="712" font-size="12" font-weight="bold" fill="#fff" textLength="64.03" lengthAdjust="spacingAndGlyphs">Single Seq</text>
<text id="r5" x="789.47" y="733" font-size="12" font-weight="bold" fill="#fff" textLength="37.90" lengthAdjust="spacingAndGlyphs">1 acqs</text>
<text id="r6" x="928.90" y="733" font-size="12" font-weight="bold" fill="#fff" textLength="48.49" lengthAdjust="spacingAndGlyphs">RL:100k</text>
<text id="r7" x="788.72" y="754" font-size="12" font-weight="bold" fill="#fff" textLength="28.38" lengthAdjust="spacingAndGlyphs">Auto</text>
<text id="r8" x="830.97" y="754" font-size="12" font-weight="bold" fill="#fff" textLength="104.69" lengthAdjust="spacingAndGlyphs">February 01, 2016</text>
<text id="r9" x="955.32" y="754" font-size="12" font-weight="bold" fill="#ff9c00" textLength="49.91" lengthAdjust="spacingAndGlyphs">08:15:47</text>
<path d="M994.6 703.5 V714" stroke="#ffff30" stroke-width="4" stroke-linecap="round" fill="none" shape-rendering="geometricPrecision"/>
<circle shape-rendering="geometricPrecision" cx="994.6" cy="715.7" r="3.5" fill="#ffff30"/>
</svg>
</body></html>
